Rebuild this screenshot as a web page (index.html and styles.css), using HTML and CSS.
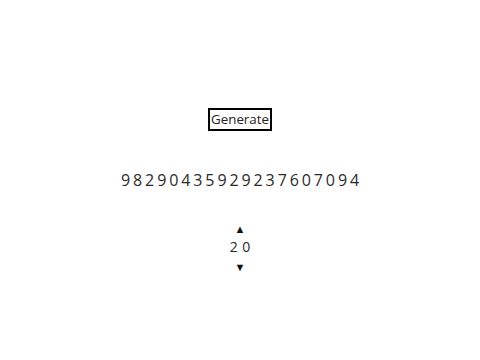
FILE: index.html
```html
<!DOCTYPE html>
<html lang="en">
<head>
    <meta charset="UTF-8">
    <title>Random Number</title>
    <link rel="stylesheet" href="styles.css">
</head>
<body>
    <div class="main">
        <button class="generate">Generate</button>
        <div class="number">98290435929237607094</div>
        <div class="counter">
            <span class="arrow">&#9650;</span>
            <span class="count">20</span>
            <span class="arrow">&#9660;</span>
        </div>
    </div>
</body>
</html>
```
FILE: styles.css
```css
* {
    margin: 0;
    padding: 0;
    box-sizing: border-box;
}

body {
    height: 100vh;
    font-family: 'Open Sans', sans-serif;
    color: #2a2a2a;
    background: white;
}

.main {
    display: flex;
    flex-direction: column;
    align-items: center;
    padding-top: 108px;
}

.generate {
    font-family: 'Open Sans', sans-serif;
    font-size: 13.33px;
    color: #222;
    background: white;
    border: 2px solid black;
    padding: 0 1px;
    height: 23px;
    line-height: 19px;
}

.number {
    margin-top: 39px;
    font-size: 16px;
    letter-spacing: 2.9px;
    line-height: 20px;
    margin-left: 3px;
}

.counter {
    margin-top: 29px;
    display: flex;
    flex-direction: column;
    align-items: center;
    font-size: 14px;
    line-height: 19px;
}

.arrow {
    font-size: 11px;
    color: #111;
}

.count {
    letter-spacing: 4.5px;
    margin-left: 4.5px;
    margin-top: -1px;
    margin-bottom: 1px;
}
```
